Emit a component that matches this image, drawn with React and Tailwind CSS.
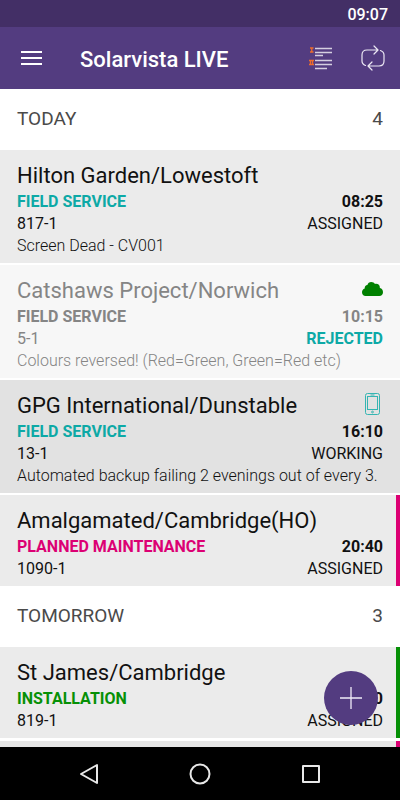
import React from 'react';

const sections = [
    {
        title: 'TODAY',
        count: 4,
        jobs: [
            { site: 'Hilton Garden/Lowestoft', type: 'FIELD SERVICE', typeColor: 'text-[#0da9a6]', time: '08:25', ref: '817-1', status: 'ASSIGNED', note: 'Screen Dead - CV001', bg: 'bg-[#ebebeb]' },
            { site: 'Catshaws Project/Norwich', type: 'FIELD SERVICE', typeColor: 'text-[#858585]', time: '10:15', ref: '5-1', status: 'REJECTED', note: 'Colours reversed! (Red=Green, Green=Red etc)', bg: 'bg-[#f7f7f7]', icon: 'cloud', faded: true },
            { site: 'GPG International/Dunstable', type: 'FIELD SERVICE', typeColor: 'text-[#0da9a6]', time: '16:10', ref: '13-1', status: 'WORKING', note: 'Automated backup failing 2 evenings out of every 3.', bg: 'bg-[#e2e2e2]', icon: 'device' },
            { site: 'Amalgamated/Cambridge(HO)', type: 'PLANNED MAINTENANCE', typeColor: 'text-[#dc0073]', time: '20:40', ref: '1090-1', status: 'ASSIGNED', bg: 'bg-[#ebebeb]', edge: 'border-[#dc0073]' },
        ],
    },
    {
        title: 'TOMORROW',
        count: 3,
        jobs: [
            { site: 'St James/Cambridge', type: 'INSTALLATION', typeColor: 'text-[#069006]', time: '08:00', ref: '819-1', status: 'ASSIGNED', bg: 'bg-[#ebebeb]', edge: 'border-[#069006]' },
        ],
    },
];

function CloudIcon() {
    return (
        <svg className="w-[21px] h-4" viewBox="0 0 21 16" fill="#008000" aria-hidden="true">
            <path d="M3.500 15C1.500 15 0 13.400 0 11.200C0 9.300 1 8 2.700 7.400C2.600 5.500 3.800 4.300 5.400 4.100C5.900 2 7.300 1 9.200 1C11 1 12.300 1.700 13 3C15.700 2.400 18 4 17.900 6.900C19.900 7.500 21 9 21 11.200C21 13.500 19.500 15 17.300 15Z" />
        </svg>
    );
}

function DeviceIcon() {
    return (
        <svg className="w-[15px] h-[22px]" viewBox="0 0 15 22" fill="none" stroke="#35b5b2" aria-hidden="true">
            <rect x="0.500" y="0.500" width="14" height="21" rx="2" />
            <rect x="2.500" y="3.500" width="10" height="13" />
            <path d="M5.500 2h4" />
            <circle cx="7.500" cy="19" r="0.900" />
        </svg>
    );
}

function JobCard({ job }) {
    const main = job.faded ? 'text-[#858585]' : 'text-[#111]';
    return (
        <li className={`pl-[17px] pt-[11px] pb-[6px] ${job.bg} ${main} ${job.edge ? `border-r-4 pr-[13px] ${job.edge}` : 'pr-[17px]'}`}>
            <div className="flex items-center justify-between text-[22px] leading-[30px]">
                <h3 className="whitespace-nowrap">{job.site}</h3>
                {job.icon === 'cloud' && <span className="pb-1"><CloudIcon /></span>}
                {job.icon === 'device' && <span className="pr-[3px] pb-1"><DeviceIcon /></span>}
            </div>
            <div className="flex justify-between text-base leading-[22px] font-bold">
                <span className={job.typeColor}>{job.type}</span>
                <time>{job.time}</time>
            </div>
            <div className="flex justify-between text-base leading-[22px]">
                <span>{job.ref}</span>
                <span className={job.faded ? 'font-bold text-[#0da9a6]' : ''}>{job.status}</span>
            </div>
            {job.note && <p className="text-base leading-[22px] font-light whitespace-nowrap">{job.note}</p>}
        </li>
    );
}

export default function App() {
    return (
        <div className="h-screen flex flex-col overflow-hidden bg-white font-['Roboto',sans-serif]">
            <div className="h-[27px] shrink-0 flex items-center justify-end px-3 pt-[2px] bg-[#432f66] text-white text-base font-medium">
                <time>09:07</time>
            </div>

            <header className="h-[62px] shrink-0 flex items-center pl-[21px] pr-[15px] bg-[#533c80] text-white">
                <button type="button" aria-label="Menu">
                    <svg className="w-[21px] h-4" viewBox="0 0 21 16" fill="none" stroke="#fff" strokeWidth="2">
                        <path d="M0 2h21M0 8h21M0 14h21" />
                    </svg>
                </button>
                <h1 className="flex-1 pl-[38px] pt-[3px] text-[22px] font-medium">Solarvista LIVE</h1>
                <button type="button" aria-label="Group jobs" className="mr-7">
                    <svg className="w-6 h-6" viewBox="0 0 24 24" fill="none" stroke="#d5cfe0">
                        <path d="M6 2.500h17M6 6.500h17M6 9.500h8M6 14.500h17M6 18.500h17M6 22.500h12" strokeWidth="1.300" />
                        <path d="M1 2h3.500M1 6h3.500M2.750 2v4M0 14.500h5M0 18.500h5M1.500 14.500v4M3.500 14.500v4" stroke="#ee6c2c" strokeWidth="1.300" />
                    </svg>
                </button>
                <button type="button" aria-label="Sync">
                    <svg className="w-6 h-[26px]" viewBox="0 0 24 26" fill="none" stroke="#ece8f3" strokeWidth="1.200" strokeLinecap="round" strokeLinejoin="round">
                        <path d="M4.500 20.500C2 19.500 1 18 1 16V10C1 7 3 5 6 5H17M13 1l4 4-4 4" />
                        <path d="M19.500 5.500C22 6.500 23 8 23 10v6c0 3-2 5-5 5H7M11 17l-4 4 4 4" />
                    </svg>
                </button>
            </header>

            <main className="relative flex-1 min-h-0">
                <div className="h-full overflow-hidden">
                    {sections.map((section) => (
                        <section key={section.title}>
                            <div className="h-[61px] flex items-center justify-between px-[17px] pb-px text-[19px] text-[#4a4a4a]">
                                <h2>{section.title}</h2>
                                <span>{section.count}</span>
                            </div>
                            <ul className="flex flex-col gap-[2px]">
                                {section.jobs.map((job) => (
                                    <JobCard key={job.ref} job={job} />
                                ))}
                            </ul>
                        </section>
                    ))}
                    <div className="mt-[3px] h-24 bg-[#e6e6e6] border-r-4 border-[#dc0073]" />
                </div>

                <button type="button" aria-label="Add job" className="absolute right-[22px] bottom-[22px] size-[54px] rounded-full bg-[#533c80] flex items-center justify-center">
                    <svg className="size-[22px]" viewBox="0 0 22 22" fill="none" stroke="#f0ecf7" strokeWidth="1.300">
                        <path d="M11 0v22M0 11h22" />
                    </svg>
                </button>
            </main>

            <nav className="h-[53px] shrink-0 flex items-center justify-center gap-[90px] bg-black">
                <button type="button" aria-label="Back">
                    <svg className="w-5 h-[22px]" viewBox="0 0 20 22" fill="none" stroke="#e8e8e8" strokeWidth="2" strokeLinejoin="round">
                        <path d="M18 2v18L2 11z" />
                    </svg>
                </button>
                <button type="button" aria-label="Home">
                    <svg className="size-[22px]" viewBox="0 0 22 22" fill="none" stroke="#e8e8e8" strokeWidth="2">
                        <circle cx="11" cy="11" r="9.500" />
                    </svg>
                </button>
                <button type="button" aria-label="Recent apps">
                    <svg className="size-5" viewBox="0 0 20 20" fill="none" stroke="#e8e8e8" strokeWidth="2" strokeLinejoin="round">
                        <path d="M2 2h16v16H2z" />
                    </svg>
                </button>
            </nav>
        </div>
    );
}
